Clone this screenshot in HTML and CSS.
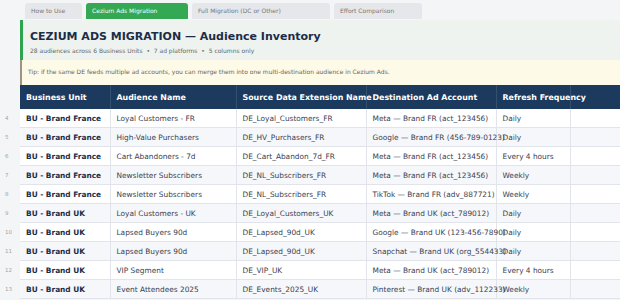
FILE: index.html
```html
<!DOCTYPE html>
<html lang="en">
<head>
    <meta charset="UTF-8">
    <title>Cezium Ads Migration</title>
    <link rel="stylesheet" href="styles.css">
</head>
<body>
    <div class="tabs">
        <div class="tab tab-how">How to Use</div>
        <div class="tab tab-active tab-cezium">Cezium Ads Migration</div>
        <div class="tab tab-full">Full Migration (DC or Other)</div>
        <div class="tab tab-effort">Effort Comparison</div>
    </div>

    <div class="banner">
        <div class="title">CEZIUM ADS MIGRATION — Audience Inventory</div>
        <div class="subtitle">28 audiences across 6 Business Units &nbsp;•&nbsp; 7 ad platforms &nbsp;•&nbsp; 5 columns only</div>
    </div>

    <div class="tip">Tip: if the same DE feeds multiple ad accounts, you can merge them into one multi-destination audience in Cezium Ads.</div>

    <table class="sheet">
        <colgroup>
            <col class="c-num">
            <col class="c-bu">
            <col class="c-aud">
            <col class="c-de">
            <col class="c-dest">
            <col class="c-freq">
            <col class="c-rest">
        </colgroup>
        <thead>
            <tr>
                <th class="num"></th>
                <th>Business Unit</th>
                <th>Audience Name</th>
                <th>Source Data Extension Name</th>
                <th>Destination Ad Account</th>
                <th>Refresh Frequency</th>
                <th></th>
            </tr>
        </thead>
        <tbody>
            <tr><td class="num">4</td><td class="bu">BU - Brand France</td><td>Loyal Customers - FR</td><td>DE_Loyal_Customers_FR</td><td>Meta — Brand FR (act_123456)</td><td>Daily</td><td></td></tr>
            <tr><td class="num">5</td><td class="bu">BU - Brand France</td><td>High-Value Purchasers</td><td>DE_HV_Purchasers_FR</td><td>Google — Brand FR (456-789-0123)</td><td>Daily</td><td></td></tr>
            <tr><td class="num">6</td><td class="bu">BU - Brand France</td><td>Cart Abandoners - 7d</td><td>DE_Cart_Abandon_7d_FR</td><td>Meta — Brand FR (act_123456)</td><td>Every 4 hours</td><td></td></tr>
            <tr><td class="num">7</td><td class="bu">BU - Brand France</td><td>Newsletter Subscribers</td><td>DE_NL_Subscribers_FR</td><td>Meta — Brand FR (act_123456)</td><td>Weekly</td><td></td></tr>
            <tr><td class="num">8</td><td class="bu">BU - Brand France</td><td>Newsletter Subscribers</td><td>DE_NL_Subscribers_FR</td><td>TikTok — Brand FR (adv_887721)</td><td>Weekly</td><td></td></tr>
            <tr><td class="num">9</td><td class="bu">BU - Brand UK</td><td>Loyal Customers - UK</td><td>DE_Loyal_Customers_UK</td><td>Meta — Brand UK (act_789012)</td><td>Daily</td><td></td></tr>
            <tr><td class="num">10</td><td class="bu">BU - Brand UK</td><td>Lapsed Buyers 90d</td><td>DE_Lapsed_90d_UK</td><td>Google — Brand UK (123-456-7890)</td><td>Daily</td><td></td></tr>
            <tr><td class="num">11</td><td class="bu">BU - Brand UK</td><td>Lapsed Buyers 90d</td><td>DE_Lapsed_90d_UK</td><td>Snapchat — Brand UK (org_554433)</td><td>Daily</td><td></td></tr>
            <tr><td class="num">12</td><td class="bu">BU - Brand UK</td><td>VIP Segment</td><td>DE_VIP_UK</td><td>Meta — Brand UK (act_789012)</td><td>Every 4 hours</td><td></td></tr>
            <tr><td class="num">13</td><td class="bu">BU - Brand UK</td><td>Event Attendees 2025</td><td>DE_Events_2025_UK</td><td>Pinterest — Brand UK (adv_112233)</td><td>Weekly</td><td></td></tr>
        </tbody>
    </table>
</body>
</html>
```

FILE: styles.css
```css
body { margin: 0; background-color: #f4f5f7; font-family: "DejaVu Sans", sans-serif; overflow: hidden; }

.tabs { display: flex; gap: 4px; height: 20px; padding: 3px 0 0 25px; box-sizing: border-box; }
.tab { height: 16px; box-sizing: border-box; padding: 4px 0 0 6px; font-size: 6px; color: #777; background-color: #e5e7eb; border-radius: 3px 3px 0 0; white-space: nowrap; }
.tab-active { background-color: #34a853; color: #fff; }
.tab-how { width: 57px; }
.tab-cezium { width: 102px; }
.tab-full { width: 138px; }
.tab-effort { width: 88px; }

.banner { margin-left: 20px; height: 40px; box-sizing: border-box; padding: 10px 0 0 7px; background-color: #eef3ef; border-left: 3px solid #2ea44f; }
.title { font-size: 11px; font-weight: bold; color: #1c2d48; line-height: 13px; white-space: nowrap; }
.subtitle { margin-top: 4px; font-size: 6px; color: #666; white-space: nowrap; }

.tip { margin-left: 20px; height: 25px; box-sizing: border-box; padding: 8px 0 0 6px; background-color: #fefae8; border-left: 2px solid #9e9385; font-size: 6px; color: #6f6350; white-space: nowrap; }

.sheet { border-collapse: collapse; table-layout: fixed; width: 640px; }
.c-num { width: 20px; }
.c-bu { width: 90px; }
.c-aud { width: 126px; }
.c-de { width: 130px; }
.c-dest { width: 130px; }
.c-freq { width: 74px; }
.c-rest { width: 70px; }

.sheet th { height: 24px; padding: 0 6px; background-color: #1c3a5e; color: #fff; font-size: 7.9px; font-weight: bold; text-align: left; white-space: nowrap; overflow: visible; border-right: 1px solid #34506f; }
.sheet td { height: 18px; padding: 0 6px; font-size: 7.4px; color: #3a4252; white-space: nowrap; overflow: visible; background-color: #fff; border-right: 1px solid #e1e5eb; border-bottom: 1px solid #e1e5eb; }
.sheet tbody tr:nth-child(even) td { background-color: #f5f7fa; }
.sheet td.bu { font-weight: bold; color: #1c2d48; }
.sheet .num, .sheet tbody tr:nth-child(even) td.num { background-color: #f4f5f7; border: none; padding: 0 0 0 5px; font-size: 5.5px; color: #a0a4aa; font-weight: normal; }
```
